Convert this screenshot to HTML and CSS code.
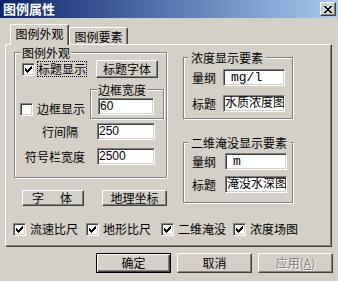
FILE: index.html
```html
<!DOCTYPE html>
<html lang="zh-CN">
<head>
  <meta charset="UTF-8">
  <title>图例属性</title>
  <link rel="stylesheet" href="styles.css">
</head>
<body>

<div class="window">
  <div class="titlebar">
    <span class="title">图例属性</span>
    <span class="close-btn">
      <svg width="8" height="7" viewBox="0 0 8 7" shape-rendering="crispEdges"><path d="M0 0h2v1h-2zM6 0h2v1h-2zM1 1h2v1h-2zM5 1h2v1h-2zM2 2h4v1h-4zM3 3h2v1h-2zM2 4h4v1h-4zM1 5h2v1h-2zM5 5h2v1h-2zM0 6h2v1h-2zM6 6h2v1h-2z"/></svg>
    </span>
  </div>

  <div class="dialog">
    <div class="tabs">
      <div class="tab tab-active">图例外观</div>
      <div class="tab">图例要素</div>
    </div>

    <div class="panel">
      <div class="panel-top">
        <div class="col-left">
          <fieldset class="group group-look">
            <legend>图例外观</legend>
            <div class="row row-title">
              <label class="check-label check-title">
                <span class="check"><svg width="11" height="11" viewBox="1 1 11 11" shape-rendering="crispEdges"><path d="M3 5h1v1h1v1h1v-1h1v-1h1v-1h1v-1h1v3h-1v1h-1v1h-1v1h-1v1h-1v-1h-1v-1h-1z"/></svg></span>
                <span class="focus">标题显示</span>
              </label>
              <button class="btn btn-title-font">标题字体</button>
            </div>
            <div class="row row-border">
              <label class="check-label check-border">
                <span class="check"></span>
                <span>边框显示</span>
              </label>
              <fieldset class="group group-width">
                <legend>边框宽度</legend>
                <div class="edit edit-width">60</div>
              </fieldset>
            </div>
            <div class="row row-spacing">
              <span class="field-label">行间隔</span>
              <div class="edit edit-num">250</div>
            </div>
            <div class="row row-symbol">
              <span class="field-label">符号栏宽度</span>
              <div class="edit edit-num">2500</div>
            </div>
          </fieldset>
          <div class="btn-row">
            <button class="btn btn-font">字　体</button>
            <button class="btn btn-geo">地理坐标</button>
          </div>
        </div>

        <div class="col-right">
          <fieldset class="group group-conc">
            <legend>浓度显示要素</legend>
            <div class="pair pair-first">
              <span class="pair-label">量纲</span>
              <div class="edit edit-mono">mg/l</div>
            </div>
            <div class="pair pair-second">
              <span class="pair-label">标题</span>
              <div class="edit">水质浓度图</div>
            </div>
          </fieldset>
          <fieldset class="group group-flood">
            <legend>二维淹没显示要素</legend>
            <div class="pair pair-first">
              <span class="pair-label">量纲</span>
              <div class="edit edit-mono">m</div>
            </div>
            <div class="pair pair-second">
              <span class="pair-label">标题</span>
              <div class="edit">淹没水深图</div>
            </div>
          </fieldset>
        </div>
      </div>

      <div class="check-row">
        <label class="check-label"><span class="check"><svg width="11" height="11" viewBox="1 1 11 11" shape-rendering="crispEdges"><path d="M3 5h1v1h1v1h1v-1h1v-1h1v-1h1v-1h1v3h-1v1h-1v1h-1v1h-1v1h-1v-1h-1v-1h-1z"/></svg></span><span>流速比尺</span></label>
        <label class="check-label"><span class="check"><svg width="11" height="11" viewBox="1 1 11 11" shape-rendering="crispEdges"><path d="M3 5h1v1h1v1h1v-1h1v-1h1v-1h1v-1h1v3h-1v1h-1v1h-1v1h-1v1h-1v-1h-1v-1h-1z"/></svg></span><span>地形比尺</span></label>
        <label class="check-label"><span class="check"><svg width="11" height="11" viewBox="1 1 11 11" shape-rendering="crispEdges"><path d="M3 5h1v1h1v1h1v-1h1v-1h1v-1h1v-1h1v3h-1v1h-1v1h-1v1h-1v1h-1v-1h-1v-1h-1z"/></svg></span><span>二维淹没</span></label>
        <label class="check-label"><span class="check"><svg width="11" height="11" viewBox="1 1 11 11" shape-rendering="crispEdges"><path d="M3 5h1v1h1v1h1v-1h1v-1h1v-1h1v-1h1v3h-1v1h-1v1h-1v1h-1v1h-1v-1h-1v-1h-1z"/></svg></span><span>浓度场图</span></label>
      </div>
    </div>

    <div class="dialog-buttons">
      <button class="btn btn-dialog btn-default">确定</button>
      <button class="btn btn-dialog">取消</button>
      <button class="btn btn-dialog btn-disabled">应用(<u>A</u>)</button>
    </div>
  </div>
</div>

</body>
</html>
```

FILE: styles.css
```css
body {
  margin: 0;
  font-family: "Noto Sans CJK SC", sans-serif;
  font-size: 12px;
  line-height: 14px;
  color: #000;
}
.window {
  width: 338px;
  height: 281px;
  background-color: #d4d0c8; /* classic dialog grey */
  overflow: hidden;
}
.titlebar {
  height: 18px;
  display: flex;
  align-items: center;
  justify-content: space-between;
  padding: 0 2px 0 3px;
  background: linear-gradient(to right, #0a246a, #a6caf0);
}
.title {
  color: #fff;
  font-size: 13px;
  font-weight: bold;
}
.close-btn {
  box-sizing: border-box;
  width: 16px;
  height: 14px;
  display: flex;
  align-items: center;
  justify-content: center;
  background-color: #d4d0c8;
  border: 1px solid;
  border-color: #fff #404040 #404040 #fff;
  box-shadow: inset -1px -1px #808080;
}
.close-btn svg {
  display: block;
}

.dialog {
  padding: 0 5px;
}
.tabs {
  display: flex;
  align-items: flex-end;
  height: 20px;
  margin: 6px 0 0 5px;
}
.tab {
  box-sizing: border-box;
  width: 59px;
  height: 17px;
  padding-top: 2px;
  text-align: center;
  border: 1px solid;
  border-bottom: 0;
  border-color: #fff #404040 transparent #fff;
  border-radius: 2px 2px 0 0;
  box-shadow: inset -1px 0 #808080;
}
.tab-active {
  position: relative;
  z-index: 1;
  height: 21px;
  margin-bottom: -1px;
  background-color: #d4d0c8;
}
.panel {
  box-sizing: border-box;
  width: 327px;
  height: 203px;
  border: 1px solid;
  border-color: #fff #404040 #404040 #fff;
  box-shadow: inset -1px -1px #808080;
}
.panel-top {
  display: flex;
  align-items: flex-start;
  padding-left: 8px;
}

/* group boxes: etched frame */
.group {
  box-sizing: border-box;
  margin: 0;
  padding: 0;
  min-width: 0;
  border: 1px solid #808080;
  box-shadow: inset 1px 1px #fff, 1px 1px #fff;
}
.group legend {
  margin-left: 6px;
  padding: 0 1px;
  line-height: 13px;
  background-color: #d4d0c8;
}

.group-look {
  width: 153px;
  height: 132px;
  margin-top: 1px;
}
.row {
  display: flex;
  align-items: center;
}
.row-title {
  height: 18px;
  margin-top: 1px;
  padding-left: 7px;
}
.check-label {
  display: flex;
  align-items: center;
  gap: 3px;
}
.check {
  box-sizing: border-box;
  flex: none;
  width: 13px;
  height: 13px;
  background-color: #fff;
  border: 1px solid;
  border-color: #808080 #fff #fff #808080;
  box-shadow: inset 1px 1px #404040, inset -1px -1px #d4d0c8;
}
.check svg {
  display: block;
}
.focus {
  outline: 1px dotted #000;
}
.row-border {
  align-items: flex-end;
  margin-top: 5px;
  padding-left: 5px;
}
.check-border {
  gap: 4px;
  margin-bottom: 3px;
}
.group-width {
  width: 74px;
  height: 36px;
  margin-left: 5px;
}
.row-spacing {
  margin-top: 4px;
}
.row-symbol {
  margin-top: 8px;
}
.field-label {
  box-sizing: border-box;
  width: 82px;
}
.row-spacing .field-label {
  padding-left: 27px;
}
.row-symbol .field-label {
  padding-left: 10px;
}

/* sunken edit boxes */
.edit {
  box-sizing: border-box;
  height: 17px;
  padding-left: 1px;
  background-color: #fff;
  border: 1px solid;
  border-color: #808080 #fff #fff #808080;
  box-shadow: inset 1px 1px #404040, inset -1px -1px #d4d0c8;
  font-family: "Liberation Sans", "Noto Sans CJK SC", sans-serif;
  line-height: 15px;
  white-space: nowrap;
  overflow: hidden;
}
.edit-width {
  width: 56px;
  margin: 2px 0 0 7px;
}
.edit-num {
  width: 58px;
}
.edit-mono {
  padding-left: 7px;
  font-family: "Liberation Mono", monospace;
  font-size: 13px;
}

/* buttons */
.btn {
  box-sizing: border-box;
  padding: 0;
  font: inherit;
  color: #000;
  background-color: #d4d0c8;
  border: 1px solid;
  border-color: #fff #404040 #404040 #fff;
  box-shadow: inset -1px -1px #808080;
}
.btn-title-font {
  width: 62px;
  height: 18px;
  margin-left: 10px;
}
.btn-row {
  display: flex;
  margin-top: 12px;
  padding-left: 8px;
}
.btn-font {
  width: 62px;
  height: 16px;
  letter-spacing: 2px;
}
.btn-geo {
  width: 65px;
  height: 16px;
  margin-left: 18px;
}

.col-right {
  width: 110px;
  margin-left: 16px;
}
.col-right .group legend {
  margin-left: 4px;
  padding: 0 3px;
}
.group-conc {
  height: 68px;
  margin-top: 6px;
}
.group-flood {
  height: 67px;
  margin-top: 17px;
}
.pair {
  display: flex;
  align-items: center;
  padding-left: 8px;
}
.pair-label {
  width: 24px;
}
.pair .edit {
  width: 62px;
  margin-left: 7px;
}
.group-flood .pair .edit {
  margin-left: 9px;
}
.group-conc .pair-first {
  margin-top: 5px;
}
.group-conc .pair-second {
  margin-top: 9px;
}
.group-flood .pair-first {
  margin-top: 4px;
}
.group-flood .pair-second {
  margin-top: 6px;
}

.check-row {
  display: grid;
  grid-template-columns: 73px 75px 72px auto;
  margin-top: 16px;
  padding-left: 7px;
}
.check-row .check-label {
  gap: 4px;
}

.dialog-buttons {
  display: flex;
  justify-content: flex-end;
  gap: 6px;
  margin-top: 6px;
}
.btn-dialog {
  width: 75px;
  height: 20px;
}
.btn-default {
  border-color: #000;
  box-shadow: inset 1px 1px #fff, inset -1px -1px #404040, inset -2px -2px #808080;
}
.btn-disabled {
  color: #808080;
  text-shadow: 1px 1px #fff;
}
```
